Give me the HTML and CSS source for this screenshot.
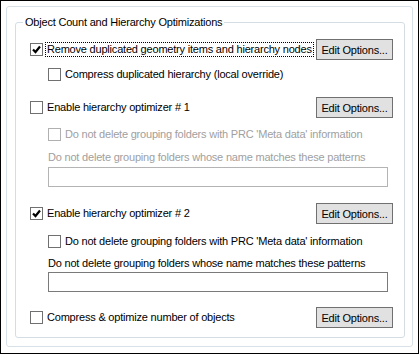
FILE: index.html
```html
<!DOCTYPE html>
<html lang="en">
<head>
<meta charset="UTF-8">
<title>Object Count and Hierarchy Optimizations</title>
<link rel="stylesheet" href="styles.css">
</head>
<body>
    <div class="window">
        <div class="frame">
            <div class="group">
                <span class="legend">Object Count and Hierarchy Optimizations</span>

                <div class="row row-btn r1">
                    <label class="check focused">
                        <span class="box checked"></span>
                        <span class="text">Remove duplicated geometry items and hierarchy nodes</span>
                    </label>
                    <button class="btn">Edit Options...</button>
                </div>

                <div class="row sub r2">
                    <label class="check">
                        <span class="box"></span>
                        <span class="text">Compress duplicated hierarchy (local override)</span>
                    </label>
                </div>

                <div class="row row-btn r3">
                    <label class="check">
                        <span class="box"></span>
                        <span class="text">Enable hierarchy optimizer # 1</span>
                    </label>
                    <button class="btn">Edit Options...</button>
                </div>

                <div class="row sub r4 disabled">
                    <label class="check">
                        <span class="box"></span>
                        <span class="text">Do not delete grouping folders with PRC 'Meta data' information</span>
                    </label>
                </div>
                <div class="caption sub r5 disabled">Do not delete grouping folders whose name matches these patterns</div>
                <div class="field sub r-in1 disabled"></div>

                <div class="row row-btn r6">
                    <label class="check">
                        <span class="box checked"></span>
                        <span class="text">Enable hierarchy optimizer # 2</span>
                    </label>
                    <button class="btn">Edit Options...</button>
                </div>

                <div class="row sub r7">
                    <label class="check">
                        <span class="box"></span>
                        <span class="text">Do not delete grouping folders with PRC 'Meta data' information</span>
                    </label>
                </div>
                <div class="caption sub r8">Do not delete grouping folders whose name matches these patterns</div>
                <div class="field sub r-in2"></div>

                <div class="row row-btn r9">
                    <label class="check">
                        <span class="box"></span>
                        <span class="text">Compress &amp; optimize number of objects</span>
                    </label>
                    <button class="btn">Edit Options...</button>
                </div>
            </div>
        </div>
    </div>
</body>
</html>
```

FILE: styles.css
```css
* {
    box-sizing: border-box;
}
body {
    margin: 0;
    background: #fff;
    font-family: "Liberation Sans", Arial, sans-serif;
    font-size: 11px;
    letter-spacing: -0.2px;
    color: #000;
}
.window {
    width: 419px;
    height: 354px;
    border: 1px solid #000;
    padding: 5px 5px 6px 5px;
    background: #fff;
}
.frame {
    height: 341px;
    border: 1px solid #d9e1e8;
    border-radius: 3px;
    padding: 15px 7px 0 8px;
}
.group {
    position: relative;
    height: 316px;
    border: 1px solid #d5dde4;
    border-radius: 3px;
    padding: 16px 11px 0 14px;
}
.legend {
    position: absolute;
    top: -8px;
    left: 7px;
    padding: 0 2px;
    background: #fff;
    line-height: 14px;
    white-space: nowrap;
}
.row {
    display: flex;
    align-items: center;
    justify-content: space-between;
    height: 16px;
    white-space: nowrap;
}
.row-btn {
    height: 21px;
}
.sub {
    margin-left: 18px;
}
.check {
    display: flex;
    align-items: center;
    gap: 2px;
}
.box {
    width: 13px;
    height: 13px;
    border: 1px solid #707070;
    background: #fff;
    position: relative;
    flex: none;
}
.box.checked::after {
    content: "";
    position: absolute;
    left: 1px;
    top: 1px;
    width: 9px;
    height: 9px;
    background: url("data:image/svg+xml,%3Csvg xmlns='http://www.w3.org/2000/svg' width='9' height='9'%3E%3Cpath d='M1 4.5 L3.5 7 L8 1.5' fill='none' stroke='%23000' stroke-width='2.2'/%3E%3C/svg%3E") no-repeat;
}
.text {
    line-height: 13px;
    padding: 0 1px;
    border: 1px solid transparent;
}
.focused .text {
    border: 1px dotted #000;
}
.btn {
    width: 77px;
    height: 21px;
    border: 1px solid #707070;
    background: #e1e1e1;
    font-family: inherit;
    font-size: 11px;
    letter-spacing: -0.2px;
    color: #000;
    padding: 0;
    flex: none;
}
.caption {
    height: 14px;
    line-height: 14px;
    white-space: nowrap;
}
.field {
    height: 20px;
    width: 340px;
    border: 1px solid #7a7a7a;
    background: #fff;
}
.disabled {
    color: #a0a0a0;
}
.disabled .box {
    border-color: #b0b0b0;
}
.field.disabled {
    border-color: #b4b4b4;
}
.r2 { margin-top: 6px; }
.r3 { margin-top: 15px; }
.r4 { margin-top: 8px; }
.r5 { margin-top: 8px; }
.r-in1 { margin-top: 3px; }
.r6 { margin-top: 16px; }
.r7 { margin-top: 9px; }
.r8 { margin-top: 7px; }
.r-in2 { margin-top: 2px; }
.r9 { margin-top: 15px; }
```
